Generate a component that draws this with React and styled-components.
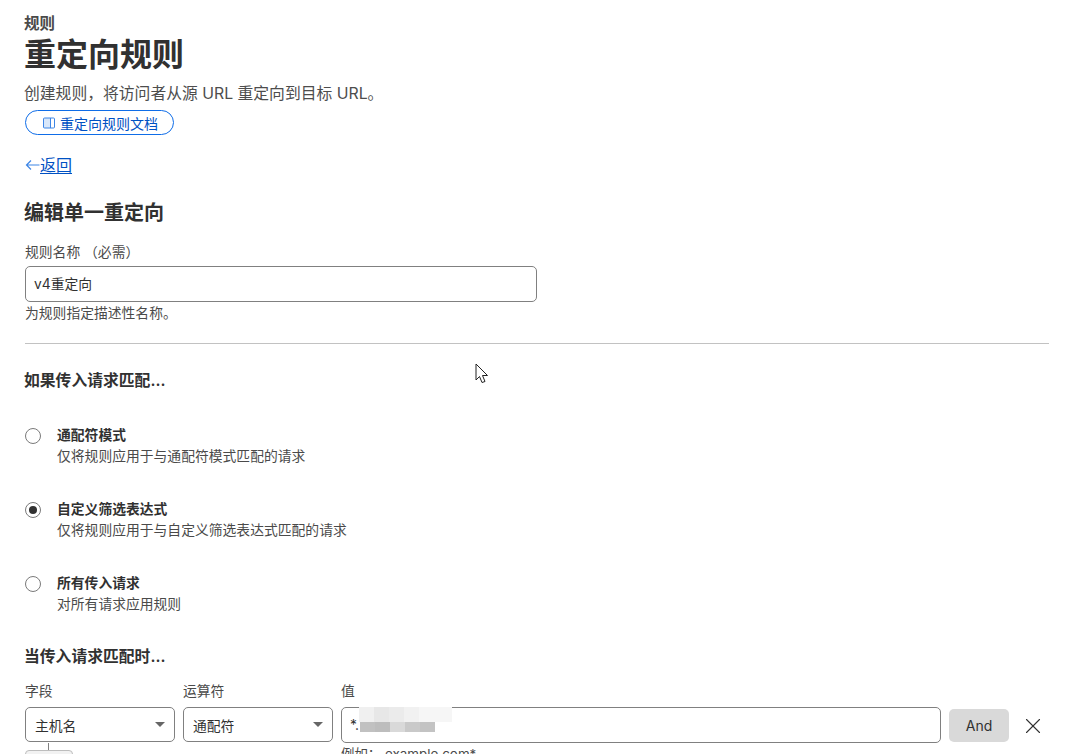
import React from "react";
import styled, { createGlobalStyle } from "styled-components";
import { X } from "lucide-react";

const GlobalStyle = createGlobalStyle`
html, body {
  margin:0;
  height:754px;
  overflow:hidden;
  background:#fff;
}
body {
  font-family:"Inter","Noto Sans CJK SC",sans-serif;
  color:#313131;
}
`;

const Page = styled.div`
position:relative;
padding:13px 37px 0 25px;
`;
const Crumb = styled.div`
font-size:15.5px;
font-weight:600;
line-height:22px;
color:#4a4a4a;
margin-left:-1px;
`;
const Title = styled.h1`
margin:0 0 0 -1px;
font-size:32px;
line-height:40px;
font-weight:700;
color:#313131;
`;
const Desc = styled.p`
margin:7px 0 0 -1px;
font-size:15.8px;
line-height:24px;
color:#4d4d4d;
`;
const DocLink = styled.a`
display:inline-flex;
align-items:center;
justify-content:center;
gap:4px;
box-sizing:border-box;
width:149px;
height:25px;
margin-top:4px;
padding-left:1px;
border:1px solid #0f6de8;
border-radius:13px;
font-size:14px;
color:#0051c3;
`;
const LinkIcon = styled.svg`
flex:none;
color:#3d86e6;
`;
const ArrowIcon = styled(LinkIcon)`
margin-top:2px;
`;
const Back = styled.div`
display:flex;
align-items:center;
margin-top:17px;
height:24px;
font-size:16px;
color:#0051c3;
`;
const BackText = styled.a`
text-decoration:underline;
text-underline-offset:2px;
`;
const SectionTitle = styled.h2`
margin:${(p) => p.$top}px 0 0 -1px;
font-size:${(p) => p.$size}px;
line-height:28px;
font-weight:600;
color:#313131;
`;
const Label = styled.label`
display:block;
font-size:13.8px;
line-height:20px;
color:#4a4a4a;
`;
const NameField = styled.div`
margin-top:15px;
`;
const NameInput = styled.div`
box-sizing:border-box;
display:flex;
align-items:center;
width:512px;
height:36px;
margin-top:4px;
padding:0 8px 2px;
border:1px solid #808080;
border-radius:5px;
font-size:13.8px;
color:#313131;
`;
const Help = styled.div`
margin:1px 0 0;
font-size:13.8px;
line-height:20px;
color:#4a4a4a;
`;
const Divider = styled.hr`
margin:20px 0 0;
border:none;
border-top:1px solid #c2c2c2;
`;
const RadioList = styled.div`
display:flex;
flex-direction:column;
gap:32px;
margin-top:29px;
`;
const RadioRow = styled.div`
display:flex;
align-items:flex-start;
gap:16px;
`;
const RadioDot = styled.span`
box-sizing:border-box;
display:flex;
align-items:center;
justify-content:center;
width:16px;
height:16px;
margin-top:4px;
border:1px solid #7a7a7a;
border-radius:50%;
&::after {
  content:"";
  display:${(p) => (p.$on ? "block" : "none")};
  width:8px;
  height:8px;
  border-radius:50%;
  background:#313131;
}
`;
const RadioText = styled.div`
padding-top:1px;
`;
const RadioTitle = styled.div`
font-size:13.8px;
line-height:20px;
font-weight:600;
color:#313131;
`;
const RadioSub = styled.div`
margin-top:1px;
font-size:13.8px;
line-height:20px;
color:#4a4a4a;
`;
const MatchRow = styled.div`
display:grid;
grid-template-columns:150px 150px 600px 60px 32px;
column-gap:8px;
margin-top:10px;
align-items:end;
`;
const Column = styled.div`
display:flex;
flex-direction:column;
gap:6px;
`;
const SelectBox = styled.div`
box-sizing:border-box;
display:flex;
align-items:center;
justify-content:space-between;
height:35px;
margin-bottom:1px;
padding:0 9px 0 9px;
border:1px solid #808080;
border-radius:5px;
font-size:13.8px;
color:#313131;
&::after {
  content:"";
  border-left:5px solid transparent;
  border-right:5px solid transparent;
  border-top:5px solid #666;
}
`;
const ValueBox = styled.div`
position:relative;
box-sizing:border-box;
display:flex;
align-items:center;
height:36px;
padding:0 8px;
border:1px solid #808080;
border-radius:5px;
font-size:13.8px;
color:#313131;
`;
const Mosaic = styled.div`
position:absolute;
left:${(p) => p.$left}px;
top:${(p) => p.$top}px;
display:flex;
height:${(p) => p.$h}px;
`;
const Tile = styled.span`
width:${(p) => p.$w}px;
background:${(p) => p.$c};
`;
const AndButton = styled.button`
height:33px;
margin-bottom:1px;
padding:0;
border:none;
border-radius:5px;
background:#d9d9d9;
font:inherit;
font-size:14px;
color:#313131;
`;
const RemoveButton = styled.button`
display:flex;
align-items:center;
justify-content:center;
height:33px;
margin-bottom:1px;
padding:0;
border:none;
background:none;
color:#313131;
`;
const SubRow = styled.div`
display:grid;
grid-template-columns:150px 150px 600px;
column-gap:8px;
`;
const Connector = styled.div`
display:flex;
flex-direction:column;
`;
const ConnectorLine = styled.span`
width:1px;
height:7px;
margin-left:23px;
background:#808080;
`;
const ConnectorBox = styled.div`
box-sizing:border-box;
width:48px;
height:30px;
border:1px solid #bdbdbd;
border-radius:4px;
background:#f2f2f2;
`;
const Example = styled.div`
grid-column:3;
margin-top:1px;
font-size:13.4px;
line-height:20px;
color:#4a4a4a;
`;
const Cursor = styled.svg`
position:absolute;
left:475px;
top:363px;
`;

const radios = [
  { title: "通配符模式", sub: "仅将规则应用于与通配符模式匹配的请求" },
  { title: "自定义筛选表达式", sub: "仅将规则应用于与自定义筛选表达式匹配的请求", on: true },
  { title: "所有传入请求", sub: "对所有请求应用规则" },
];

const topTiles = [
  [15, "#f0f0f0"], [15, "#e7e7e7"], [15, "#ebebeb"], [15, "#f1f1f1"], [33, "#f6f6f6"],
];
const bottomTiles = [
  [15, "#c1c1c1"], [15, "#bdbdbd"], [15, "#d9d9d9"], [15, "#c9c9c9"], [15, "#c3c3c3"],
];

function App() {
  return (
    <Page>
      <GlobalStyle />
      <Crumb>规则</Crumb>
      <Title>重定向规则</Title>
      <Desc>创建规则，将访问者从源 URL 重定向到目标 URL。</Desc>
      <DocLink>
        <LinkIcon width="14" height="14" viewBox="0 0 14 14" fill="none" stroke="currentColor">
          <rect x="1.5" y="2" width="11" height="10" rx="1" />
          <path d="M8.5 2v10" />
          <path d="M1.5 2h7v10h-7z" fill="currentColor" fillOpacity="0.2" stroke="none" />
        </LinkIcon>
        重定向规则文档
      </DocLink>
      <Back>
        <ArrowIcon width="15" height="12" viewBox="0 0 15 12" fill="none" stroke="currentColor" strokeWidth="1.2">
          <path d="M1.5 6h13M6 1.5L1.5 6 6 10.5" />
        </ArrowIcon>
        <BackText>返回</BackText>
      </Back>

      <SectionTitle $top={23} $size={20}>编辑单一重定向</SectionTitle>
      <NameField>
        <Label>规则名称 （必需）</Label>
        <NameInput>v4重定向</NameInput>
        <Help>为规则指定描述性名称。</Help>
      </NameField>
      <Divider />

      <SectionTitle $top={23} $size={15.8}>如果传入请求匹配...</SectionTitle>
      <RadioList>
        {radios.map((r) => (
          <RadioRow key={r.title}>
            <RadioDot $on={r.on} />
            <RadioText>
              <RadioTitle>{r.title}</RadioTitle>
              <RadioSub>{r.sub}</RadioSub>
            </RadioText>
          </RadioRow>
        ))}
      </RadioList>

      <SectionTitle $top={29} $size={15.8}>当传入请求匹配时...</SectionTitle>
      <MatchRow>
        <Column>
          <Label>字段</Label>
          <SelectBox>主机名</SelectBox>
        </Column>
        <Column>
          <Label>运算符</Label>
          <SelectBox>通配符</SelectBox>
        </Column>
        <Column>
          <Label>值</Label>
          <ValueBox>
            *.
            <Mosaic $left={17} $top={-1} $h={15}>
              {topTiles.map(([w, c], i) => <Tile key={i} $w={w} $c={c} />)}
            </Mosaic>
            <Mosaic $left={18} $top={14} $h={10}>
              {bottomTiles.map(([w, c], i) => <Tile key={i} $w={w} $c={c} />)}
            </Mosaic>
          </ValueBox>
        </Column>
        <AndButton>And</AndButton>
        <RemoveButton>
          <X size={26} strokeWidth={1} />
        </RemoveButton>
      </MatchRow>
      <SubRow>
        <Connector>
          <ConnectorLine />
          <ConnectorBox />
        </Connector>
        <span />
        <Example>例如：.example.com*</Example>
      </SubRow>

      <Cursor width="14" height="22" viewBox="0 0 14 22">
        <path
          d="M1 1 L1 17 L4.5 13.5 L7 19.5 L10 18.5 L7.5 12.5 L12.5 12.5 Z"
          fill="#fff"
          stroke="#222"
          strokeWidth="1"
          strokeLinejoin="round"
        />
      </Cursor>
    </Page>
  );
}

export default App;
